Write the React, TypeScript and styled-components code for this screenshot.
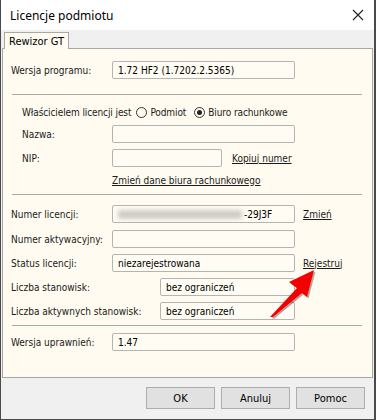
import styled, { createGlobalStyle } from 'styled-components';

const GlobalStyle = createGlobalStyle`
  html, body {
    margin: 0;
    padding: 0;
    background: #ffffff;
  }
  * {
    box-sizing: border-box;
  }
`;

const Window = styled.div`
  position: relative;
  width: 376px;
  height: 420px;
  display: flex;
  flex-direction: column;
  background: #f0f0f0;
  border: 1px solid #4a4a4a;
  border-top: none;
  border-right-width: 2px;
  font-family: 'DejaVu Sans Condensed', 'DejaVu Sans', sans-serif;
  font-size: 10px;
  color: #1a1a1a;
`;

const TitleBar = styled.div`
  height: 30px;
  flex: none;
  display: flex;
  align-items: center;
  justify-content: space-between;
  padding: 0 8px 0 9px;
  background: #ffffff;
`;

const Title = styled.span`
  font-family: 'Noto Sans', 'Open Sans', sans-serif;
  font-size: 12px;
  color: #000;
`;

const CloseButton = styled.div`
  width: 16px;
  height: 16px;
  display: flex;
  align-items: center;
  justify-content: center;
`;

const TabStrip = styled.div`
  height: 18px;
  flex: none;
  display: flex;
  align-items: flex-end;
  padding-left: 3px;
`;

const Tab = styled.div`
  height: 17px;
  padding: 0 4px;
  display: flex;
  align-items: center;
  background: #fffbf0;
  border: 1px solid #a8a8a8;
  border-bottom: none;
  margin-bottom: -1px;
  position: relative;
  z-index: 1;
  font-size: 11px;
  color: #000;
`;

const Panel = styled.div`
  height: 330px;
  flex: none;
  margin: 0 1px 0 1px;
  background: #fffbf0;
  border: 1px solid #a8a8a8;
  padding: 0 8px 0 8px;
  display: flex;
  flex-direction: column;
`;

const Row = styled.div<{ $top: number; $indent?: boolean }>`
  display: flex;
  align-items: center;
  height: 18px;
  margin-top: ${(p) => p.$top}px;
  padding-left: ${(p) => (p.$indent ? 11 : 0)}px;
`;

const Label = styled.span<{ $width: number }>`
  width: ${(p) => p.$width}px;
  flex: none;
  white-space: nowrap;
`;

const Field = styled.div<{ $width: number }>`
  width: ${(p) => p.$width}px;
  height: 18px;
  flex: none;
  display: flex;
  align-items: center;
  padding-left: 5px;
  border: 1px solid #b4b4b4;
  border-radius: 2px;
  background: #fffcf4;
  font-size: 10px;
  color: #000;
  white-space: nowrap;
  overflow: hidden;
`;

const Blurred = styled.span`
  width: 124px;
  height: 9px;
  margin-right: 2px;
  background: #cfcdc8;
  filter: blur(2px);
`;

const Link = styled.span<{ $left: number }>`
  margin-left: ${(p) => p.$left}px;
  text-decoration: underline;
  color: #1a1a1a;
  white-space: nowrap;
`;

const Separator = styled.div<{ $top: number }>`
  height: 1px;
  margin: ${(p) => p.$top}px 2px 0 1px;
  background: #a8a8a8;
  flex: none;
`;

const RadioText = styled.span`
  letter-spacing: -0.1px;
`;

const Radio = styled.span<{ $checked?: boolean; $left: number }>`
  width: 11px;
  height: 11px;
  flex: none;
  margin-left: ${(p) => p.$left}px;
  margin-right: 3px;
  border: 1px solid #333;
  border-radius: 50%;
  display: flex;
  align-items: center;
  justify-content: center;
  &::after {
    content: '';
    width: 5px;
    height: 5px;
    border-radius: 50%;
    background: ${(p) => (p.$checked ? '#222' : 'transparent')};
  }
`;

const Footer = styled.div`
  flex: 1;
  display: flex;
  justify-content: flex-end;
  align-items: flex-start;
  gap: 6px;
  padding: 9px 9px 0 0;
`;

const Button = styled.div`
  width: 69px;
  height: 22px;
  display: flex;
  align-items: center;
  justify-content: center;
  background: #e1e1e1;
  border: 1px solid #adadad;
  font-size: 11px;
  color: #000;
`;

const Arrow = styled.svg`
  position: absolute;
  left: 260px;
  top: 262px;
  overflow: visible;
`;

export default function App() {
  return (
    <>
      <GlobalStyle />
      <Window>
        <TitleBar>
          <Title>Licencje podmiotu</Title>
          <CloseButton>
            <svg width="12" height="12" viewBox="0 0 12 12">
              <path d="M1 1 L11 11 M11 1 L1 11" stroke="#222" strokeWidth="1.1" />
            </svg>
          </CloseButton>
        </TitleBar>
        <TabStrip>
          <Tab>Rewizor GT</Tab>
        </TabStrip>
        <Panel>
          <Row $top={12}>
            <Label $width={101}>Wersja programu:</Label>
            <Field $width={183}>1.72 HF2 (1.7202.2.5365)</Field>
          </Row>
          <Separator $top={15} />
          <Row $top={8} $indent>
            <RadioText>Właścicielem licencji jest</RadioText>
            <Radio $left={5} />
            <RadioText>Podmiot</RadioText>
            <Radio $left={8} $checked />
            <RadioText>Biuro rachunkowe</RadioText>
          </Row>
          <Row $top={4} $indent>
            <Label $width={90}>Nazwa:</Label>
            <Field $width={183} />
          </Row>
          <Row $top={6} $indent>
            <Label $width={90}>NIP:</Label>
            <Field $width={110} />
            <Link $left={10}>Kopiuj numer</Link>
          </Row>
          <Row $top={4} $indent>
            <Label $width={90} />
            <Link $left={0}>Zmień dane biura rachunkowego</Link>
          </Row>
          <Separator $top={5} />
          <Row $top={10}>
            <Label $width={101}>Numer licencji:</Label>
            <Field $width={183}>
              <Blurred />
              -29J3F
            </Field>
            <Link $left={8}>Zmień</Link>
          </Row>
          <Row $top={7}>
            <Label $width={101}>Numer aktywacyjny:</Label>
            <Field $width={183} />
          </Row>
          <Row $top={6}>
            <Label $width={101}>Status licencji:</Label>
            <Field $width={183}>niezarejestrowana</Field>
            <Link $left={8}>Rejestruj</Link>
          </Row>
          <Row $top={6}>
            <Label $width={149}>Liczba stanowisk:</Label>
            <Field $width={135}>bez ograniczeń</Field>
          </Row>
          <Row $top={6}>
            <Label $width={149}>Liczba aktywnych stanowisk:</Label>
            <Field $width={135}>bez ograniczeń</Field>
          </Row>
          <Separator $top={5} />
          <Row $top={7}>
            <Label $width={101}>Wersja uprawnień:</Label>
            <Field $width={183}>1.47</Field>
          </Row>
        </Panel>
        <Footer>
          <Button>OK</Button>
          <Button>Anuluj</Button>
          <Button>Pomoc</Button>
        </Footer>
        <Arrow width="60" height="60" viewBox="0 0 60 60">
          <polygon
            points="53,8 28,20 36,26 9,55 12,55 41,31 46,35"
            fill="#3a0000"
            opacity="0.35"
            transform="translate(1.5,1.5)"
          />
          <polygon points="53,8 28,20 36,26 9,55 12,55 41,31 46,35" fill="#f40000" />
        </Arrow>
      </Window>
    </>
  );
}
